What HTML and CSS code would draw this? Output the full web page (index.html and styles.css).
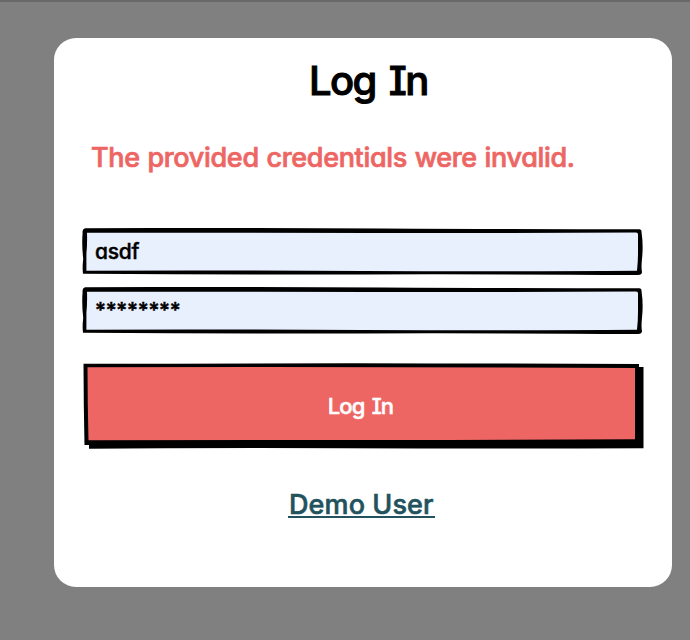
FILE: index.html
```
<!DOCTYPE html>
<html lang="en">
<head>
<meta charset="utf-8">
<title>Log In</title>
<link rel="stylesheet" href="styles.css">
</head>
<body>
<main class="modal">
  <h1 class="title"><span>Log In</span></h1>
  <p class="error"><span>The provided credentials were invalid.</span></p>
  <form class="form">
    <div class="field">
      <svg class="frame" viewBox="0 0 562 46" preserveAspectRatio="none" aria-hidden="true"><path class="fill" d="M2 2H560V44H2Z"/><path fill-rule="evenodd" d="M3 0.2Q150 -0.4 300 .5T557 1.2Q559.5 1 559.5 4Q561.5 17 560 30Q559 39 560 43Q560 46 556 46Q400 45 280 45.4T1 44.8Q.2 39 1.2 30Q-.4 16 .6 5Q0 1 3 .2ZM5 5Q5.4 16 4.4 25V41.8Q130 41.4 280 42T555 41.8Q556 33 556 24T556 6Q556 4.4 554 4.4Q420 5 290 4.8T5 4.7Z"/></svg>
      <span class="value username">asdf</span>
    </div>
    <div class="field">
      <svg class="frame" viewBox="0 0 562 46" preserveAspectRatio="none" aria-hidden="true"><path class="fill" d="M2 2H560V44H2Z"/><path fill-rule="evenodd" d="M3 0.2Q150 -0.4 300 .5T557 1.2Q559.5 1 559.5 4Q561.5 17 560 30Q559 39 560 43Q560 46 556 46Q400 45 280 45.4T1 44.8Q.2 39 1.2 30Q-.4 16 .6 5Q0 1 3 .2ZM5 5Q5.4 16 4.4 25V41.8Q130 41.4 280 42T555 41.8Q556 33 556 24T556 6Q556 4.4 554 4.4Q420 5 290 4.8T5 4.7Z"/></svg>
      <span class="value password">********</span>
    </div>
    <button class="submit" type="button">
      <svg class="frame" viewBox="0 0 562 86" aria-hidden="true"><path d="M.5 .8Q200 .2 350 .4L556 1V4H560.5V85.2Q420 85.6 260 85.2T6 85.8V82H1.5Q.6 42 .5 .8Z"/><path class="face" d="M4.5 4.3Q270 3.6 552 5V76.2Q430 77 300 77T5.5 77.2Q4.5 40 4.5 4.3Z"/></svg>
      <span class="label">Log In</span>
    </button>
  </form>
  <a class="demo" href="#"><span>Demo User</span></a>
</main>
</body>
</html>
```
FILE: styles.css
```
* { box-sizing: border-box; }
html { height: 100%; }
body {
  margin: 0;
  height: 640px;
  overflow: hidden;
  padding: 36px 18px 0 54px;
  border-top: 2px solid #696969;
  background: #808080;
  font-family: "Inter", "Liberation Sans", sans-serif;
  font-feature-settings: "cv11" 1, "cv08" 1, "calt" 0;
}
.modal {
  display: flex;
  flex-direction: column;
  height: 549px;
  border-radius: 22px;
  background: #fff;
}
.title {
  margin: 18px 0 0 255px;
  font-size: 40px;
  line-height: 50px;
  font-weight: 500;
  letter-spacing: -1.6px;
  word-spacing: 4px;
  white-space: nowrap;
  -webkit-text-stroke: 1px #000;
}
.error {
  margin: 34px 0 0 37px;
  color: #ed6663;
  font-size: 27px;
  line-height: 36px;
  font-weight: 500;
  letter-spacing: -.33px;
  word-spacing: .8px;
  white-space: nowrap;
  -webkit-text-stroke: .7px #ed6663;
}
.form {
  display: flex;
  flex-direction: column;
  margin: 52px 0 0 28px;
  width: 562px;
}
.field {
  position: relative;
  display: flex;
  width: 562px;
  height: 47px;
  margin-bottom: 12px;
}
.frame {
  position: absolute;
  inset: 0;
  width: 100%;
  height: 100%;
}
.fill { fill: #e8effd; }
.face { fill: #ed6663; }
.value {
  position: relative;
  margin: 11px 0 0 13px;
  font-size: 21px;
  line-height: 26px;
  font-weight: 500;
  letter-spacing: -.25px;
  -webkit-text-stroke: .4px #000;
}
.password { -webkit-text-stroke: .5px #000; }
.submit {
  position: relative;
  width: 562px;
  height: 86px;
  margin: 17px 0 0 1px;
  padding: 0 7px 1px 0;
  border: 0;
  background: none;
  color: #fff;
  font: 500 22px/28px "Inter", "Liberation Sans", sans-serif;
  font-feature-settings: inherit;
  letter-spacing: -.8px;
  word-spacing: 2px;
  -webkit-text-stroke: .5px #fff;
}
.label { position: relative; }
.demo {
  align-self: flex-start;
  margin: 39px 0 0 234px;
  border-bottom: 2px solid #22525d;
  padding: 0 1px;
  color: #22525d;
  font-size: 27px;
  line-height: 34px;
  height: 30px;
  font-weight: 500;
  letter-spacing: .1px;
  text-decoration: none;
  white-space: nowrap;
  -webkit-text-stroke: .6px #22525d;
}
```
